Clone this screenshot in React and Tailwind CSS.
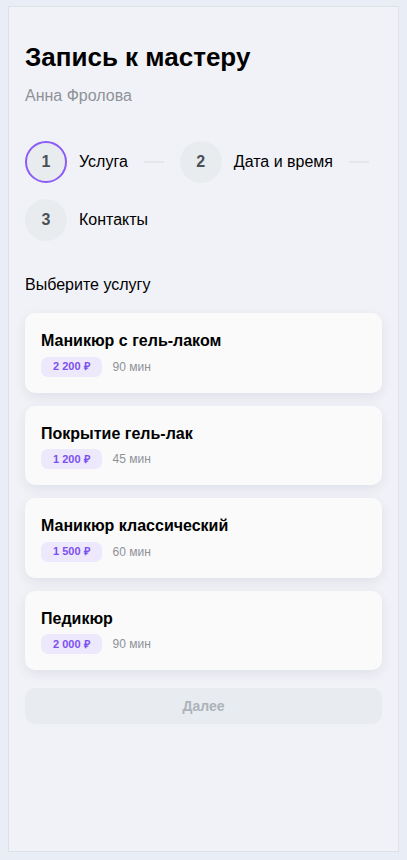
import React, {useState} from "react";

const services = [
    {name: "Маникюр с гель-лаком", price: "2 200 ₽", time: "90 мин"},
    {name: "Покрытие гель-лак", price: "1 200 ₽", time: "45 мин"},
    {name: "Маникюр классический", price: "1 500 ₽", time: "60 мин"},
    {name: "Педикюр", price: "2 000 ₽", time: "90 мин"},
]

const steps = ["Услуга", "Дата и время", "Контакты"]

const App = () => {
    const [step] = useState(0)
    const [selected, setSelected] = useState(null)

    return(
        <div className="min-h-screen bg-[#e9edf5] p-2 pt-[6px] pb-2 flex" style={{fontFamily: '"Liberation Sans", Arial, sans-serif'}}>
            <div className="flex-1 bg-[#f1f2f7] border border-[#dde1e8] px-4 pt-[34px] pb-4">
                <h1 className="text-[26px] leading-8 font-bold text-black">Запись к мастеру</h1>
                <div className="mt-[11px] text-base leading-6 text-[#8e9299]">Анна Фролова</div>

                <div className="mt-[33px] flex flex-wrap gap-x-4 gap-y-4">
                    {steps.map((s, i) => (
                        <div key={i} className="flex items-center">
                            <div className={i == step
                                ? "w-[42px] h-[42px] rounded-full border-2 border-[#8b5cf6] bg-[#e9ecef] flex items-center justify-center text-base font-bold text-[#4b5058]"
                                : "w-[42px] h-[42px] rounded-full bg-[#e9ecef] flex items-center justify-center text-base font-bold text-[#4b5058]"}>
                                {i + 1}
                            </div>
                            <span className="ml-3 text-base text-black">{s}</span>
                            {i < steps.length - 1 ? <div className="ml-4 w-5 h-[2px] bg-[#e4e6ea]"></div> : null}
                        </div>
                    ))}
                </div>

                <div className="mt-[32px] text-base leading-6 text-black">Выберите услугу</div>

                <div className="mt-4 flex flex-col gap-[13px]">
                    {services.map((s, i) => (
                        <div key={i} onClick={() => setSelected(i)} className="cursor-pointer bg-[#fafafa] rounded-[10px] px-4 pt-4 pb-4 shadow-[0_4px_12px_rgba(30,40,80,0.08)]">
                            <div className="text-base leading-6 font-bold text-black">{s.name}</div>
                            <div className="mt-[3.5px] flex items-center gap-[11px]">
                                <span className="h-5 px-3 rounded-[7px] bg-[#ede8fb] text-[11px] font-bold text-[#7c4ff0] flex items-center">{s.price}</span>
                                <span className="text-xs text-[#8e9299]">{s.time}</span>
                            </div>
                        </div>
                    ))}
                </div>

                <button disabled={selected == null} className="mt-[18px] w-full h-9 rounded-[10px] bg-[#e8ebef] text-sm font-bold text-[#adb3ba]">Далее</button>
            </div>
        </div>
    )
}

export default App
